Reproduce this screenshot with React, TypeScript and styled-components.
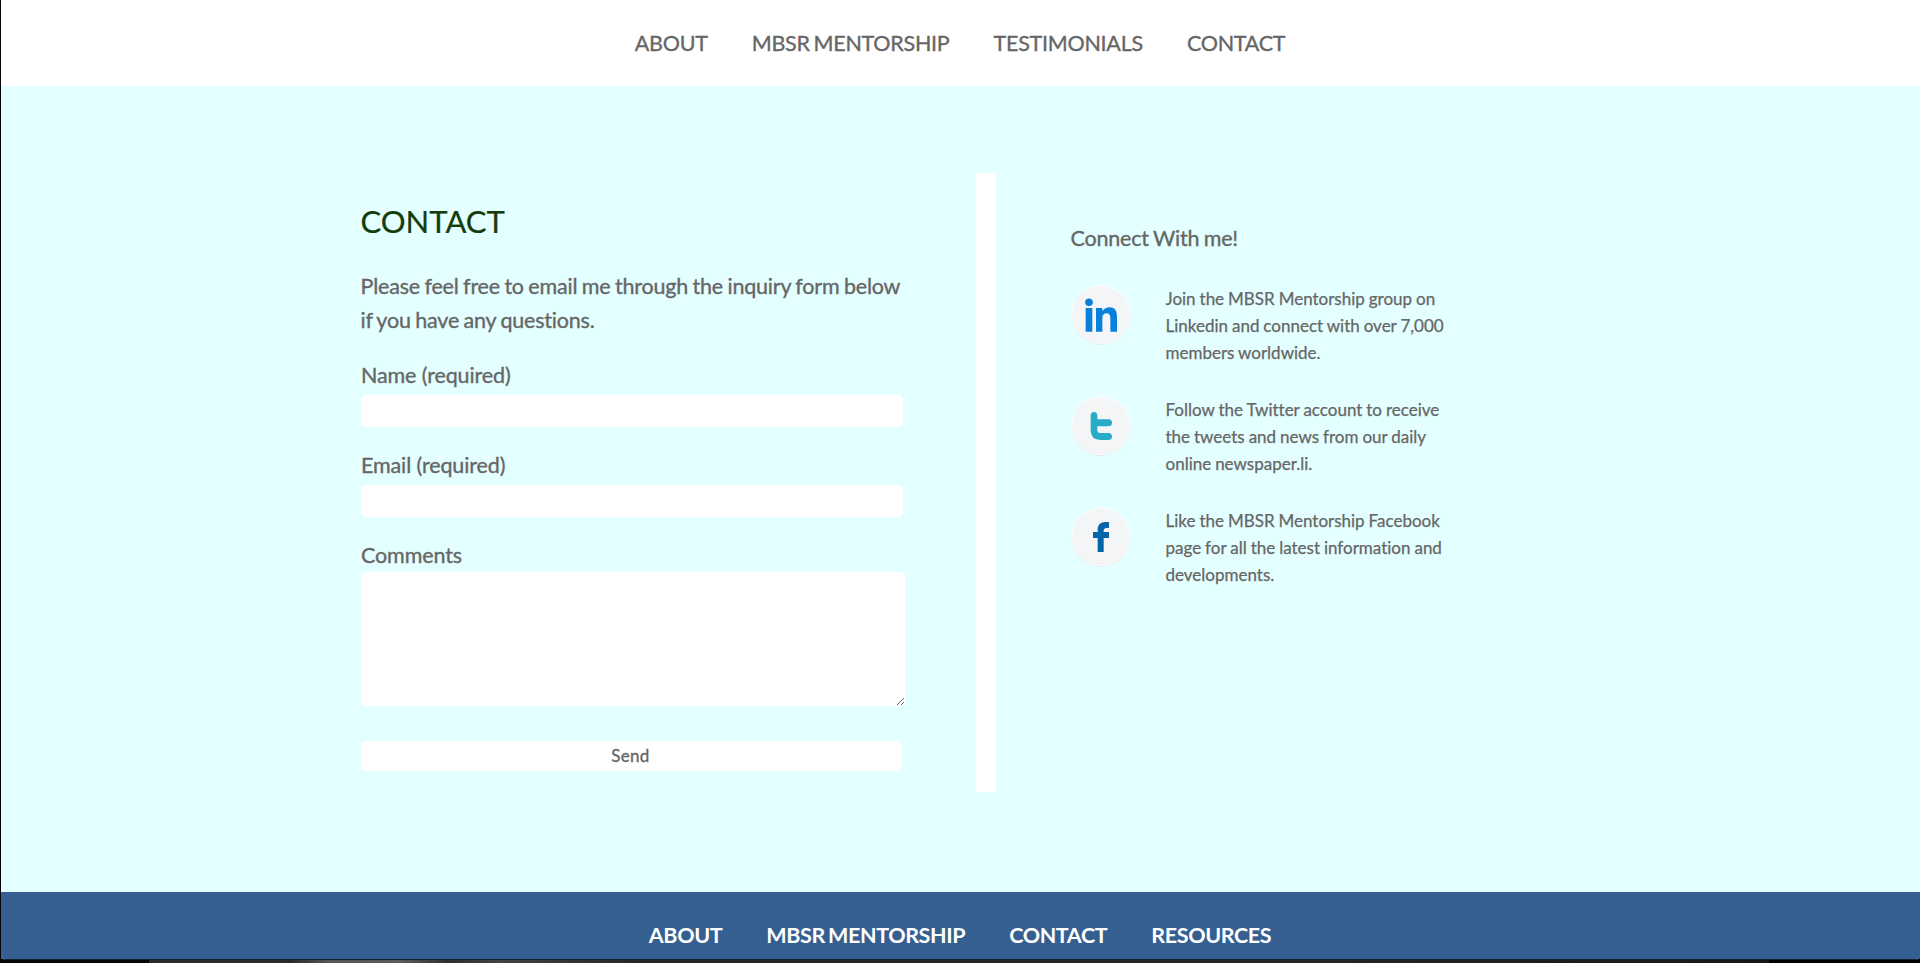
import React from "react";
import styled, { createGlobalStyle } from "styled-components";

const GlobalStyle = createGlobalStyle`
  * { box-sizing: border-box; }
  html, body { margin: 0; padding: 0; background: #050505; overflow: hidden; }
  body {
    font-family: Lato, "Liberation Sans", sans-serif;
    font-variant-ligatures: none;
    color: #666;
  }
  p, h1, h2 { margin: 0; }
`;

const Desktop = styled.div`
  height: 963px;
  padding-left: 1px;
  background: linear-gradient(90deg, #050505 149px, #2c2b2c 149px, #2a2a2b 290px, #565656 330px, #5a5a5a 400px, #2e2e2f 450px, #444 500px, #262527 640px, #262527 1300px, #17161a 1769px, #000 1769px);
`;

const Page = styled.div`
  height: 960px;
  display: flex;
  flex-direction: column;
  overflow: hidden;
  border-radius: 0 0 4px 4px;
  border-bottom: 1px solid #17202f;
  background: #e3ffff;
`;

const Bar = styled.nav<{ $footer?: boolean }>`
  display: flex;
  flex: none;
  justify-content: center;
  gap: 44px;
  height: ${(p) => (p.$footer ? 67 : 86)}px;
  padding: 30px 1px 0 0;
  background: ${(p) => (p.$footer ? "#355f91" : "#fff")};
`;

const NavLink = styled.a<{ $light?: boolean }>`
  font-size: 21.5px;
  font-weight: ${(p) => (p.$light ? 700 : 400)};
  line-height: 26px;
  letter-spacing: ${(p) => (p.$light ? -0.38 : -0.25)}px;
  word-spacing: ${(p) => (p.$light ? -1.6 : -1.4)}px;
  color: ${(p) => (p.$light ? "#fff" : "#666")};
  -webkit-text-stroke: ${(p) => (p.$light ? "0" : "0.35px")};
`;

const Content = styled.main`
  display: flex;
  flex: 1;
  align-items: flex-start;
  padding: 87px 0 0 360px;
`;

const FormColumn = styled.form`
  display: flex;
  flex-direction: column;
  align-items: flex-start;
  width: 615px;
  height: 618px;
  padding-top: 30px;
`;

const Title = styled.h1`
  margin-left: -0.5px;
  font-size: 31px;
  font-weight: 400;
  line-height: 36px;
  color: #143c0c;
  -webkit-text-stroke: 0.2px;
`;

const Intro = styled.p`
  margin: 30px 0 25px -0.5px;
  font-size: 21.5px;
  line-height: 34px;
  letter-spacing: -0.2px;
  word-spacing: -0.8px;
  white-space: nowrap;
  -webkit-text-stroke: 0.35px;
`;

const Label = styled.label`
  display: flex;
  flex-direction: column;
  font-size: 21.5px;
  line-height: 26px;
  letter-spacing: -0.12px;
  -webkit-text-stroke: 0.35px;
  & + & { margin-top: 25px; }
`;

const Field = styled.input`
  width: 542px;
  height: 32px;
  margin-top: 7px;
  border: 0;
  border-radius: 5px;
  background: #fff;
`;

const Area = styled.textarea`
  width: 544px;
  height: 134px;
  margin-top: 4px;
  border: 0;
  border-radius: 5px;
  background: #fff;
  resize: both;
`;

const Send = styled.button`
  width: 540px;
  height: 30px;
  margin-top: 35px;
  padding: 0 1px 0 0;
  border: 0;
  border-radius: 5px;
  background: #fff;
  color: #666;
  font: 400 17px/30px Lato, sans-serif;
  letter-spacing: 0.3px;
  -webkit-text-stroke: 0.35px;
`;

const Divider = styled.div`
  width: 20px;
  height: 619px;
  background: #fff;
`;

const Social = styled.section`
  padding: 52px 0 0 75px;
`;

const SocialTitle = styled.h2`
  margin-left: -0.5px;
  font-size: 21.5px;
  font-weight: 400;
  line-height: 26px;
  letter-spacing: -0.2px;
  word-spacing: -0.8px;
  -webkit-text-stroke: 0.35px;
`;

const SocialRow = styled.div`
  display: flex;
  align-items: flex-start;
  gap: 34.5px;
  height: 111px;
  &:first-of-type { margin-top: 34px; }
`;

const Badge = styled.svg`
  width: 60px;
  height: 60px;
  flex: none;
`;

const Blurb = styled.p`
  font-size: 17px;
  line-height: 27px;
  word-spacing: -0.4px;
  white-space: nowrap;
  -webkit-text-stroke: 0.25px;
`;

const Circle = () => (
  <>
    <circle cx="90" cy="91.5" r="88" fill="#cfdddf" />
    <circle cx="90" cy="89.500" r="87.5" fill="#f4f5f7" stroke="#fff" strokeWidth="2.5" />
  </>
);

const LinkedIn = () => (
  <Badge viewBox="0 0 180 180">
    <Circle />
    <g fill="#0680db">
      <circle cx="54" cy="52" r="11.5" />
      <path d="M44 69h20v71H44zM75 69h19v10q8-12 22-12 22 0 22 27v46h-20V99q0-14-11-14-13 0-13 15v40H75z" />
    </g>
  </Badge>
);

const Twitter = () => (
  <Badge viewBox="0 0 180 180">
    <Circle />
    <path
      d="M59 59q0-11 10-11t10 11v11h33q11 0 11 10.500t-11 10.500H79v10q0 10 10 10h23q11 0 11 10.500t-11 10.500H89q-30 0-30-29z"
      fill="#29acca"
    />
  </Badge>
);

const Facebook = () => (
  <Badge viewBox="0 0 180 180">
    <Circle />
    <path d="M80 135V93H66V75h14v-6q0-24 23-24h11v18h-7q-9 0-9 8v4h16v18H98v42z" fill="#0664a8" />
  </Badge>
);

const social = [
  { Icon: LinkedIn, lines: ["Join the MBSR Mentorship group on", "Linkedin and connect with over 7,000", "members worldwide."] },
  { Icon: Twitter, lines: ["Follow the Twitter account to receive", "the tweets and news from our daily", "online newspaper.li."] },
  { Icon: Facebook, lines: ["Like the MBSR Mentorship Facebook", "page for all the latest information and", "developments."] },
];

export default function App() {
  return (
    <Desktop>
      <GlobalStyle />
      <Page>
        <Bar>
          {["ABOUT", "MBSR MENTORSHIP", "TESTIMONIALS", "CONTACT"].map((t) => (
            <NavLink key={t}>{t}</NavLink>
          ))}
        </Bar>
        <Content>
          <FormColumn>
            <Title>CONTACT</Title>
            <Intro>
              Please feel free to email me through the inquiry form below
              <br />
              if you have any questions.
            </Intro>
            <Label>
              Name (required)
              <Field />
            </Label>
            <Label>
              Email (required)
              <Field />
            </Label>
            <Label>
              Comments
              <Area />
            </Label>
            <Send type="button">Send</Send>
          </FormColumn>
          <Divider />
          <Social>
            <SocialTitle>Connect With me!</SocialTitle>
            {social.map(({ Icon, lines }) => (
              <SocialRow key={lines[0]}>
                <Icon />
                <Blurb>
                  {lines.map((line) => (
                    <React.Fragment key={line}>
                      {line}
                      <br />
                    </React.Fragment>
                  ))}
                </Blurb>
              </SocialRow>
            ))}
          </Social>
        </Content>
        <Bar $footer>
          {["ABOUT", "MBSR MENTORSHIP", "CONTACT", "RESOURCES"].map((t) => (
            <NavLink key={t} $light>{t}</NavLink>
          ))}
        </Bar>
      </Page>
    </Desktop>
  );
}
